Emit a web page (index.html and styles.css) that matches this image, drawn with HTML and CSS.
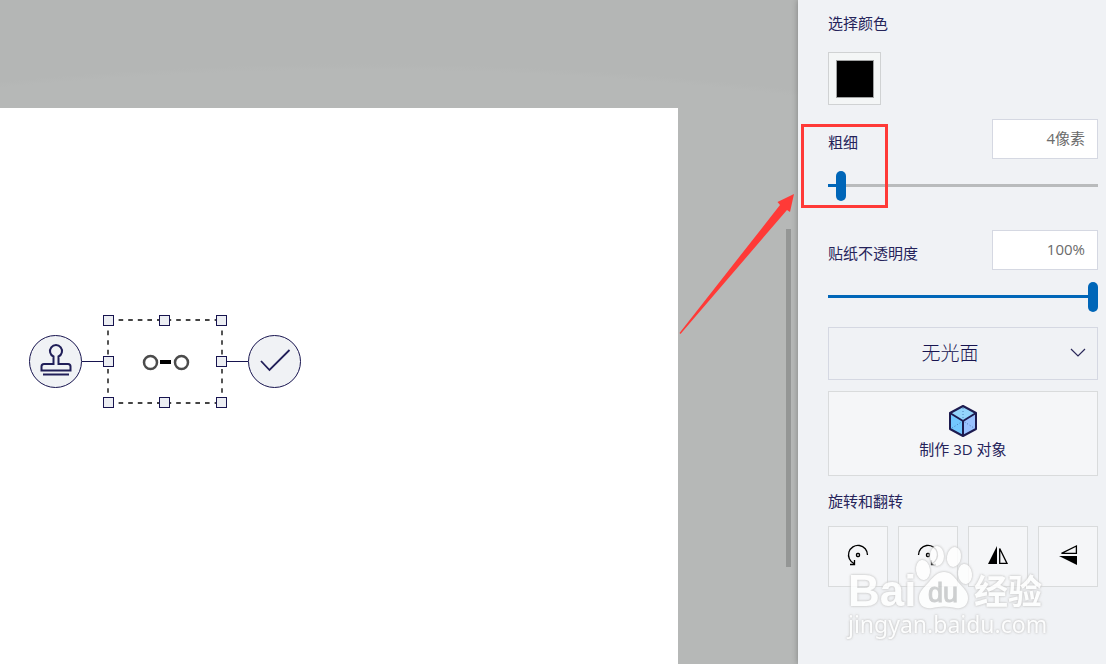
FILE: index.html
```html
<!DOCTYPE html>
<html lang="zh-CN">
<head>
  <meta charset="UTF-8">
  <title>贴纸</title>
  <link rel="stylesheet" href="styles.css">
</head>
<body>
  <main class="workspace">
    <div class="paper">
      <div class="selection">
        <button class="round-btn" type="button" aria-label="图章">
          <svg width="51" height="51" viewBox="0 0 51 51">
            <path d="M23.500 28V20.500A6 6 0 1 1 28.500 20.500V28H38Q40.500 28 40.500 30.500V34.500H11.500V30.500Q11.500 28 14 28Z" fill="none" stroke="#201e58" stroke-width="2"/>
            <path d="M13 38.500H39" stroke="#201e58" stroke-width="2"/>
          </svg>
        </button>
        <span class="connector"></span>
        <svg class="frame" width="124" height="93" viewBox="0 0 124 93">
          <path d="M5 5H119M5 88H119M5 5V88M119 5V88" fill="none" stroke="#444" stroke-width="1.800" stroke-dasharray="4.600 5" stroke-dashoffset="-1"/>
          <g fill="none" stroke="#4b4b4b" stroke-width="2.500">
            <circle cx="47.500" cy="47.500" r="6.500"/>
            <circle cx="78.500" cy="47.500" r="6.500"/>
          </g>
          <rect x="57" y="45" width="11" height="4" fill="#000"/>
          <g fill="#eceef3" stroke="#17144f">
            <rect x="0.500" y="0.500" width="10" height="10"/>
            <rect x="56.500" y="0.500" width="10" height="10"/>
            <rect x="113.500" y="0.500" width="10" height="10"/>
            <rect x="0.500" y="41.500" width="10" height="10"/>
            <rect x="113.500" y="41.500" width="10" height="10"/>
            <rect x="0.500" y="82.500" width="10" height="10"/>
            <rect x="56.500" y="82.500" width="10" height="10"/>
            <rect x="113.500" y="82.500" width="10" height="10"/>
          </g>
        </svg>
        <span class="connector"></span>
        <button class="round-btn" type="button" aria-label="确定">
          <svg width="51" height="51" viewBox="0 0 51 51">
            <path d="M12 25L20.500 34L40.500 14" fill="none" stroke="#201e58" stroke-width="1.800"/>
          </svg>
        </button>
      </div>
    </div>
    <div class="scrollbar"></div>
  </main>

  <aside class="panel">
    <h2 class="title">选择颜色</h2>
    <button class="swatch" type="button" aria-label="黑色"><span class="swatch-color"></span></button>

    <div class="field">
      <label for="thick">粗细</label>
      <input class="value" type="text" id="thickValue" value="4像素" aria-label="粗细数值">
    </div>
    <input class="slider" type="range" id="thick" min="1" max="100" value="4" style="--fill: 4%">

    <div class="field field-opacity">
      <label for="opacity">贴纸不透明度</label>
      <input class="value" type="text" id="opacityValue" value="100%" aria-label="不透明度数值">
    </div>
    <input class="slider" type="range" id="opacity" min="0" max="100" value="100" style="--fill: 100%">

    <div class="select-wrap">
      <select class="finish" aria-label="材质">
        <option>无光面</option>
      </select>
      <svg class="chevron" width="16" height="10" viewBox="0 0 16 10">
        <path d="M1 1L8 8L15 1" fill="none" stroke="#2a2859" stroke-width="1.200"/>
      </svg>
    </div>

    <button class="make3d" type="button">
      <svg width="30" height="34" viewBox="0 0 30 34">
        <path d="M15 2L28 9L15 17L2 9Z" fill="#93d4fb"/>
        <path d="M2 9L15 17V32L2 25Z" fill="#72c8ff"/>
        <path d="M28 9L15 17V32L28 25Z" fill="#99c1ff"/>
        <path d="M15 4V16M4 24L15 17L26 24" fill="none" stroke="#4d7fb8" stroke-width="1" stroke-dasharray="1 2"/>
        <path d="M15 2L28 9V25L15 32L2 25V9ZM2 9L15 17L28 9M15 17V32" fill="none" stroke="#1d1b50" stroke-width="2" stroke-linejoin="round"/>
      </svg>
      <span>制作 3D 对象</span>
    </button>

    <h2 class="title">旋转和翻转</h2>
    <div class="tools">
      <button class="tool" type="button" aria-label="向左旋转">
        <svg width="22" height="22" viewBox="0 0 22 22">
          <path d="M20.500 11A9.500 9.500 0 1 0 7 19.500M3 20.500H7.500V16" fill="none" stroke="#000" stroke-width="1.300"/>
          <rect x="9.500" y="9.500" width="3" height="3" rx="1" fill="none" stroke="#000" stroke-width="1.300"/>
        </svg>
      </button>
      <button class="tool" type="button" aria-label="向右旋转">
        <svg width="22" height="22" viewBox="0 0 22 22">
          <path d="M1.500 11A9.500 9.500 0 1 1 15 19.500M19 20.500H14.500V16" fill="none" stroke="#000" stroke-width="1.300"/>
          <rect x="9.500" y="9.500" width="3" height="3" rx="1" fill="none" stroke="#000" stroke-width="1.300"/>
        </svg>
      </button>
      <button class="tool" type="button" aria-label="水平翻转">
        <svg width="22" height="22" viewBox="0 0 22 22">
          <path d="M10 2V20H1Z"/>
          <path d="M12.700 4.500V19.400H20Z" fill="none" stroke="#000" stroke-width="1.300"/>
        </svg>
      </button>
      <button class="tool" type="button" aria-label="垂直翻转">
        <svg width="22" height="22" viewBox="0 0 22 22">
          <path d="M2 12H20V21Z"/>
          <path d="M4.500 9.400H19.400V2Z" fill="none" stroke="#000" stroke-width="1.300"/>
        </svg>
      </button>
    </div>

    <div class="highlight"></div>
    <svg class="arrow" width="116" height="142" viewBox="0 0 116 142">
      <path d="M0.500 139L101 11L98.500 8L115 0L111 18L108 16L1.500 140Z" fill="#ff3a37"/>
    </svg>

    <svg class="watermark" width="204" height="98" viewBox="0 0 204 98">
      <g class="mark">
        <text class="brand" x="2" y="62">Bai</text>
        <path d="M98 28C104 28 108 32 112 38C117 44 122 47 122 54C122 62 116 65 110 64C102 62 94 62 86 64C79 65 73 62 73 54C73 47 78 44 83 38C88 32 92 28 98 28Z"/>
        <ellipse cx="77" cy="26" rx="7" ry="10" transform="rotate(-8 77 26)"/>
        <ellipse cx="91" cy="12" rx="7" ry="10"/>
        <ellipse cx="108" cy="13" rx="7" ry="10" transform="rotate(10 108 13)"/>
        <ellipse cx="119" cy="30" rx="7" ry="10" transform="rotate(-8 119 30)"/>
        <text class="brand-cn" x="128" y="60">经验</text>
        <text class="site" x="2" y="89">jingyan.baidu.com</text>
      </g>
      <text class="du" x="82" y="58">du</text>
    </svg>
  </aside>

  <script>
    document.querySelectorAll(".slider").forEach(slider => {
      slider.addEventListener("input", () => {
        const part = (slider.value - slider.min) / (slider.max - slider.min) * 100;
        slider.style.setProperty("--fill", part + "%");
        const unit = slider.id === "thick" ? "像素" : "%";
        document.getElementById(slider.id + "Value").value = slider.value + unit;
      });
    });
  </script>
</body>
</html>
```

FILE: styles.css
```css
* {
  box-sizing: border-box;
}
body {
  margin: 0;
  min-height: 100vh;
  display: flex;
  overflow: hidden;
  background: #f0f2f5;
  color: #25235a;
  font-family: "Open Sans", "Noto Sans CJK SC", sans-serif;
  font-size: 15px;
  line-height: 20px;
}
button, input, select {
  font: inherit;
  color: inherit;
}
button {
  padding: 0;
  cursor: pointer;
}
svg {
  display: block;
}

/* canvas area */
.workspace {
  position: relative;
  flex: 1;
  display: flex;
  padding: 108px 120px 0 0;
  background: radial-gradient(ellipse 1500px 600px at 360px 664px, #b6b8b7 99%, #b4b6b5 100%);
}
.paper {
  position: relative;
  flex: 1;
  background: #fff;
}
.selection {
  position: absolute;
  left: 29px;
  top: 207px;
  display: flex;
  align-items: center;
}
.round-btn {
  width: 53px;
  height: 53px;
  border: 1px solid #17144f;
  border-radius: 50%;
  background: #f0f2f5;
}
.connector {
  width: 21px;
  height: 1px;
  background: #17144f;
}
.scrollbar {
  position: absolute;
  right: 7px;
  top: 229px;
  width: 5px;
  height: 338px;
  background: #949695;
}

/* side panel */
.panel {
  position: relative;
  width: 308px;
  padding: 13px 8px 0 30px;
  background: #f0f2f5;
  box-shadow: 0 0 6px rgba(0, 0, 0, 0.3);
}
.title {
  margin: 0;
  font-size: 15px;
  font-weight: normal;
}
.swatch {
  display: block;
  width: 53px;
  height: 53px;
  margin: 19px 0 14px;
  padding: 7px 6px 6px 7px;
  border: 1px solid #d0d2d3;
  background: #f4f6f6;
}
.swatch-color {
  display: block;
  height: 38px;
  border: 1px solid #a0a2a2;
  background: #000;
}
.field {
  display: flex;
  align-items: center;
  justify-content: space-between;
}
.field label {
  padding-top: 6px;
}
.field-opacity {
  margin-top: 29px;
}
.value {
  width: 106px;
  height: 40px;
  padding: 0 12px 3px;
  border: 1px solid #d5d8e2;
  background: #fff;
  color: #6b6b6b;
  text-align: right;
}
.slider {
  -webkit-appearance: none;
  appearance: none;
  display: block;
  width: 100%;
  height: 30px;
  margin: 12px 0 0;
  background: linear-gradient(#0066b8, #0066b8) 0 13px / var(--fill) 3px no-repeat,
    linear-gradient(#b9bbbc, #b9bbbc) 0 13px / 100% 3px no-repeat;
}
.slider::-webkit-slider-thumb {
  -webkit-appearance: none;
  width: 10px;
  height: 30px;
  border-radius: 5px;
  background: #0066b8;
}
.select-wrap {
  position: relative;
  margin: 15px 0 11px;
}
.finish {
  -webkit-appearance: none;
  appearance: none;
  display: block;
  width: 100%;
  height: 53px;
  padding: 0 26px 2px 0;
  border: 1px solid #d5d8e2;
  border-radius: 0;
  background: #f0f2f5;
  color: #17144f;
  font-size: 19px;
  font-weight: 300;
  text-align: center;
  text-align-last: center;
}
.chevron {
  position: absolute;
  right: 12px;
  top: 21px;
  pointer-events: none;
}
.make3d {
  display: flex;
  flex-direction: column;
  align-items: center;
  gap: 1px;
  width: 100%;
  height: 85px;
  margin-bottom: 15px;
  padding-top: 12px;
  border: 1px solid #d9dbdc;
  background: #f5f6f8;
}
.tools {
  display: grid;
  grid-template-columns: repeat(4, 1fr);
  gap: 10px;
  margin-top: 15px;
}
.tool {
  display: flex;
  align-items: center;
  justify-content: center;
  height: 61px;
  padding-bottom: 4px;
  border: 1px solid #d9dbdc;
  background: #f5f6f8;
}

/* marks over the page */
.highlight {
  position: absolute;
  left: 3px;
  top: 124px;
  width: 87px;
  height: 84px;
  border: 3px solid #ff3a37;
  pointer-events: none;
}
.arrow {
  position: absolute;
  left: -119px;
  top: 194px;
  pointer-events: none;
}
.watermark {
  position: absolute;
  left: 48px;
  top: 544px;
  overflow: visible;
  pointer-events: none;
  opacity: 0.85;
}
.mark {
  fill: #fff;
  filter: drop-shadow(0 0 1px #bbb) drop-shadow(0 0 1px #ddd);
}
.brand {
  font: bold 44px "Liberation Sans", sans-serif;
}
.brand-cn {
  font: bold 34px "Noto Sans CJK SC", sans-serif;
}
.site {
  font: 23px "Noto Sans", sans-serif;
}
.du {
  font: 27px "Liberation Sans", sans-serif;
  fill: #c8caca;
  stroke: #c8caca;
}
```
